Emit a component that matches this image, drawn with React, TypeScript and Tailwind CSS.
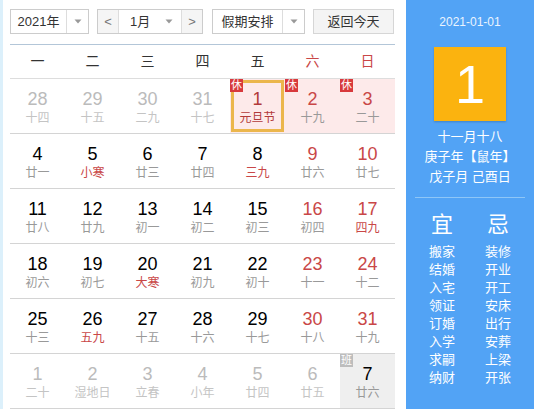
import React from "react"
import clsx from "clsx"

type Day = {
  n: number
  lunar: string
  muted?: boolean
  redNum?: boolean
  redLunar?: boolean
  holiday?: boolean
  selected?: boolean
  work?: boolean
}

const rows: Day[][] = [
  [
    { n: 28, lunar: "十四", muted: true },
    { n: 29, lunar: "十五", muted: true },
    { n: 30, lunar: "二九", muted: true },
    { n: 31, lunar: "十七", muted: true },
    { n: 1, lunar: "元旦节", holiday: true, selected: true, redNum: true, redLunar: true },
    { n: 2, lunar: "十九", holiday: true, redNum: true },
    { n: 3, lunar: "二十", holiday: true, redNum: true }
  ],
  [
    { n: 4, lunar: "廿一" },
    { n: 5, lunar: "小寒", redLunar: true },
    { n: 6, lunar: "廿三" },
    { n: 7, lunar: "廿四" },
    { n: 8, lunar: "三九", redLunar: true },
    { n: 9, lunar: "廿六", redNum: true },
    { n: 10, lunar: "廿七", redNum: true }
  ],
  [
    { n: 11, lunar: "廿八" },
    { n: 12, lunar: "廿九" },
    { n: 13, lunar: "初一" },
    { n: 14, lunar: "初二" },
    { n: 15, lunar: "初三" },
    { n: 16, lunar: "初四", redNum: true },
    { n: 17, lunar: "四九", redNum: true, redLunar: true }
  ],
  [
    { n: 18, lunar: "初六" },
    { n: 19, lunar: "初七" },
    { n: 20, lunar: "大寒", redLunar: true },
    { n: 21, lunar: "初九" },
    { n: 22, lunar: "初十" },
    { n: 23, lunar: "十一", redNum: true },
    { n: 24, lunar: "十二", redNum: true }
  ],
  [
    { n: 25, lunar: "十三" },
    { n: 26, lunar: "五九", redLunar: true },
    { n: 27, lunar: "十五" },
    { n: 28, lunar: "十六" },
    { n: 29, lunar: "十七" },
    { n: 30, lunar: "十八", redNum: true },
    { n: 31, lunar: "十九", redNum: true }
  ],
  [
    { n: 1, lunar: "二十", muted: true },
    { n: 2, lunar: "湿地日", muted: true },
    { n: 3, lunar: "立春", muted: true },
    { n: 4, lunar: "小年", muted: true },
    { n: 5, lunar: "廿四", muted: true },
    { n: 6, lunar: "廿五", muted: true },
    { n: 7, lunar: "廿六", work: true }
  ]
]

const weekdays = ["一", "二", "三", "四", "五", "六", "日"]
const good = ["搬家", "结婚", "入宅", "领证", "订婚", "入学", "求嗣", "纳财"]
const bad = ["装修", "开业", "开工", "安床", "出行", "安葬", "上梁", "开张"]

const Arrow = () => (
  <svg width="8" height="5" viewBox="0 0 8 5">
    <path d="M0.5 0.5 L7.5 0.5 L4 4.5 Z" fill="#999" />
  </svg>
)

const Cell: React.FC<{ d: Day }> = ({ d }) => (
  <div
    className={clsx(
      "relative flex h-[54px] flex-col items-center pt-[10px]",
      d.holiday && "bg-[#fdeaea]",
      d.work && "bg-[#efefef]"
    )}
  >
    {d.selected && (
      <div className="absolute inset-[1px] border-[3px] border-[#ebb64c]"></div>
    )}
    {d.holiday && (
      <span className="absolute left-0 top-0 h-[13px] w-[13px] bg-[#d8393c] text-center text-[11px] leading-[13px] text-white">
        休
      </span>
    )}
    {d.work && (
      <span className="absolute left-0 top-0 h-[13px] w-[13px] bg-[#bdbdbd] text-center text-[11px] leading-[13px] text-white">
        班
      </span>
    )}
    <span
      className={clsx(
        "text-[18px] leading-[21px]",
        d.muted
          ? "text-[#bbbbbb]"
          : d.selected
          ? "text-[#b23a3a]"
          : d.redNum
          ? "text-[#c94747]"
          : "text-black"
      )}
    >
      {d.n}
    </span>
    <span
      className={clsx(
        "text-[12px] leading-[16px]",
        d.muted
          ? "text-[#c4c4c4]"
          : d.selected
          ? "text-[#b23a3a]"
          : d.redLunar
          ? "text-[#c94747]"
          : "text-[#999999]"
      )}
    >
      {d.lunar}
    </span>
  </div>
)

const App: React.FC = () => {
  return (
    <div className="flex h-[409px] w-[534px] overflow-hidden bg-white font-['Liberation_Sans','Noto_Sans_CJK_SC',sans-serif]">
      <div className="w-[406px] border-l-[3px] border-[#dcf0fb] pl-[7px] pr-[11px]">
        <div className="flex h-[45px] items-start gap-[8px] border-b border-[#b3c6d8] pt-[9px] text-[13px] text-[#333]">
          <div className="flex h-[25px] w-[79px] border border-[#cccccc] bg-white">
            <span className="flex w-[55px] items-center justify-center">2021年</span>
            <span className="flex flex-1 items-center justify-center border-l border-[#dddddd]">
              <Arrow />
            </span>
          </div>
          <div className="flex h-[25px] w-[106px] border border-[#cccccc] bg-white">
            <span className="flex w-[21px] items-center justify-center border-r border-[#dddddd] bg-[#f5f5f5] text-[#777]">
              &lt;
            </span>
            <span className="flex flex-1 items-center justify-between pl-[11px] pr-[8px]">
              1月
              <Arrow />
            </span>
            <span className="flex w-[21px] items-center justify-center border-l border-[#dddddd] bg-[#f5f5f5] text-[#777]">
              &gt;
            </span>
          </div>
          <div className="ml-[1px] flex h-[25px] w-[93px] border border-[#cccccc] bg-white">
            <span className="flex w-[69px] items-center justify-center">假期安排</span>
            <span className="flex flex-1 items-center justify-center border-l border-[#dddddd]">
              <Arrow />
            </span>
          </div>
          <button className="flex h-[25px] w-[81px] items-center justify-center border border-[#d6d6d6] bg-[#f4f4f4] text-[#333]">
            返回今天
          </button>
        </div>
        <div className="grid h-[34px] grid-cols-7 border-b border-[#dddddd] text-[14px]">
          {weekdays.map((w, i) => (
            <span
              key={w}
              className={clsx(
                "flex items-center justify-center",
                i >= 5 ? "text-[#c94747]" : "text-[#333]"
              )}
            >
              {w}
            </span>
          ))}
        </div>
        {rows.map((row, r) => (
          <div key={r} className="grid grid-cols-7 border-b border-[#d4d4d4]">
            {row.map((d, i) => (
              <Cell key={i} d={d} />
            ))}
          </div>
        ))}
      </div>
      <div className="flex w-[128px] flex-col items-center bg-[#52a3f5] text-white">
        <div className="pt-[14px] text-[12px] leading-[16px] text-[#eaf4ff]">2021-01-01</div>
        <div className="mt-[17px] flex h-[74px] w-[72px] items-center justify-center bg-[#fbb30f] text-[54px] font-light leading-none shadow-[0_1px_2px_rgba(0,0,0,0.2)]">
          1
        </div>
        <div className="mt-[6px] flex flex-col items-center text-[13px] leading-[20px]">
          <span>十一月十八</span>
          <span>庚子年【鼠年】</span>
          <span>戊子月 己酉日</span>
        </div>
        <div className="mt-[10px] h-px w-[110px] bg-[#8ec6f7]"></div>
        <div className="mt-[13px] grid w-[112px] grid-cols-2 text-center">
          <span className="text-[22px] leading-[28px]">宜</span>
          <span className="text-[22px] leading-[28px]">忌</span>
          <div className="mt-[4px] flex flex-col text-[13px] leading-[18px]">
            {good.map((g) => (
              <span key={g}>{g}</span>
            ))}
          </div>
          <div className="mt-[4px] flex flex-col text-[13px] leading-[18px]">
            {bad.map((b) => (
              <span key={b}>{b}</span>
            ))}
          </div>
        </div>
      </div>
    </div>
  )
}

export default App
